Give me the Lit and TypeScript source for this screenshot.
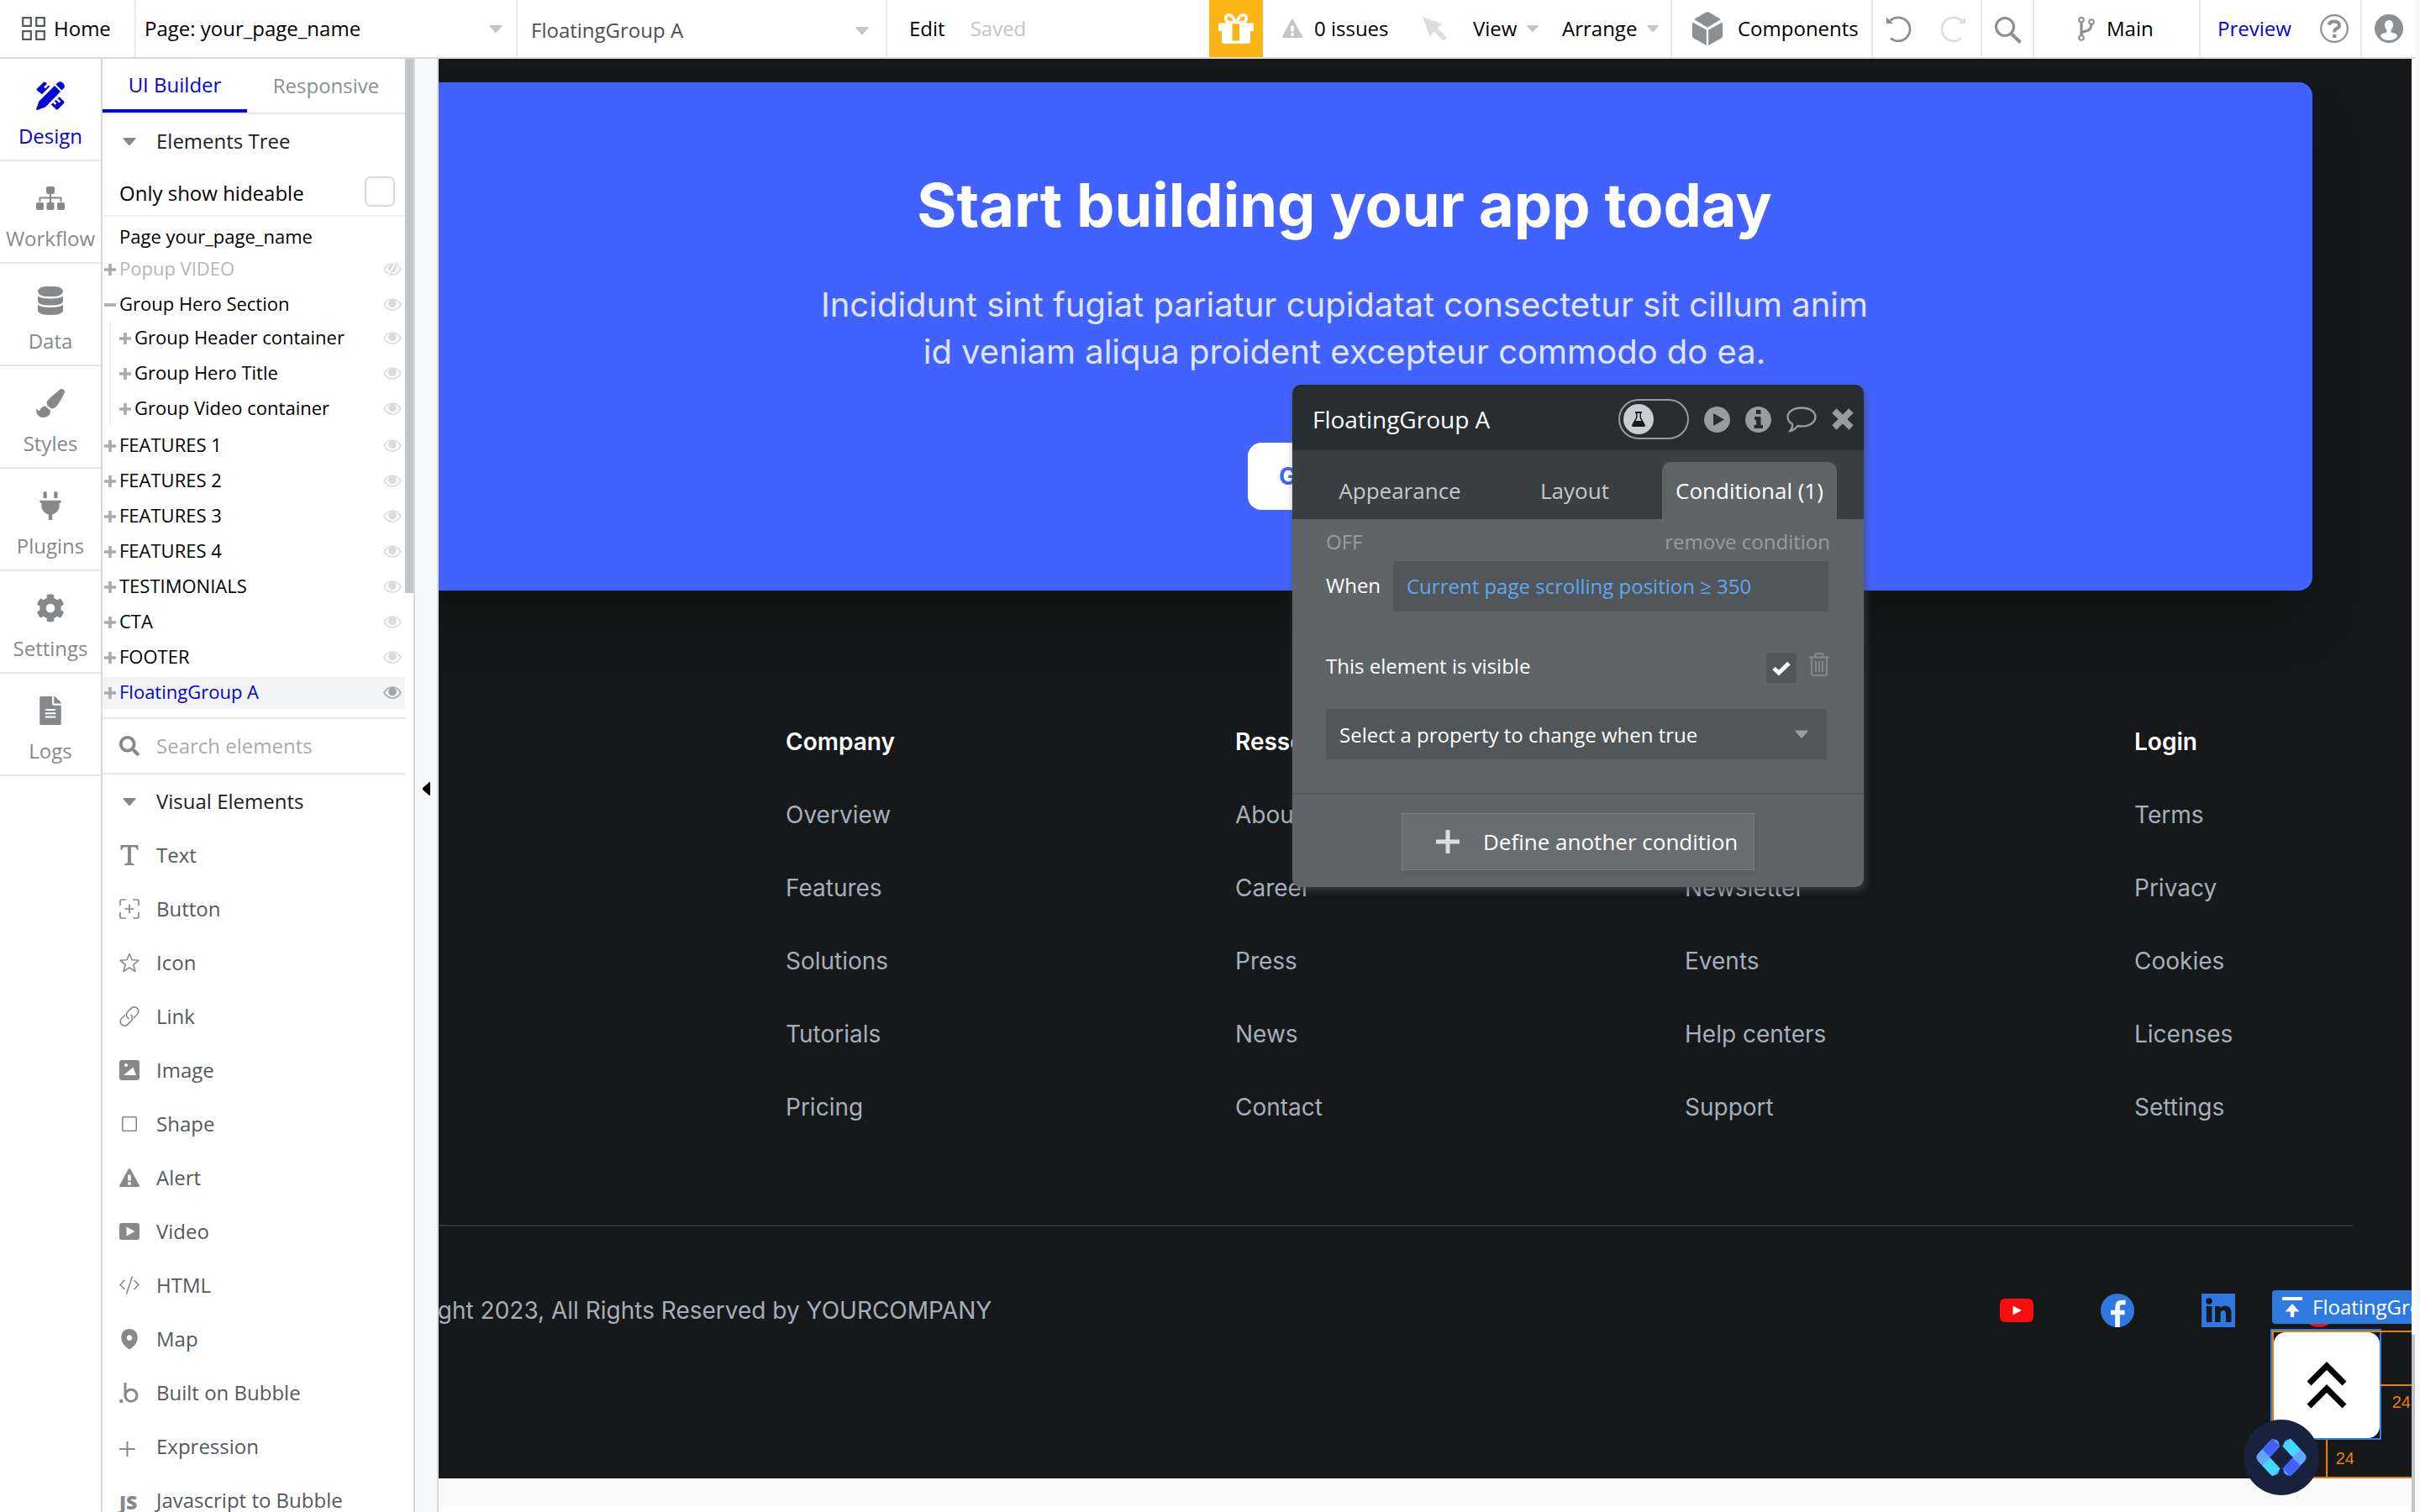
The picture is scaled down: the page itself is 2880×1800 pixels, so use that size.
import { LitElement, html, css, svg, nothing } from "lit";
import { customElement } from "lit/decorators.js";
import { classMap } from "lit/directives/class-map.js";

const base = css`
  :host {
    display: block;
    font-family: "Open Sans", "Noto Sans", sans-serif;
    font-size: 24px;
    line-height: 34px;
    color: #000;
  }
  *,
  *::before,
  *::after {
    box-sizing: border-box;
  }
  button,
  input,
  select {
    font: inherit;
    color: inherit;
    border: 0;
    margin: 0;
    padding: 0;
    background: none;
    border-radius: 0;
    outline: none;
    text-align: left;
  }
  select,
  input[type="checkbox"] {
    appearance: none;
  }
  a {
    color: inherit;
    text-decoration: none;
  }
  ul {
    list-style: none;
    margin: 0;
    padding: 0;
  }
  svg {
    display: block;
    flex: none;
    fill: currentColor;
    overflow: visible;
  }
  .line {
    fill: none;
    stroke: currentColor;
  }
`;

const icon = (w: number, h: number, box: string, body: unknown) =>
  html`<svg width=${w} height=${h} viewBox=${box} aria-hidden="true">${body}</svg>`;

const caret = (w = 16, h = 9) => icon(w, h, "0 0 16 9", svg`<path d="M1 0h14l.7 1L8.600 9H7.400L.3 1z"/>`);

const navIcons = {
  design: icon(34, 34, "0 0 34 34", svg`
    <path d="M1 8.500 8.500 1.200Q10 0 11.500 1.200L13 2.800 9.200 6.600 11 8.400 14.800 4.600 16.200 6 7 15.200 1 10.500Q.2 9.500 1 8.500z"/>
    <path d="M27.800 18.500 33 23.500Q34 24.800 33 26L26 33Q24.800 34 23.500 33L17.800 27.500 20 25.300 22.500 27.800 24.300 26 21.800 23.500 23.500 21.800 27.500 25.600 29.300 23.800 25.600 20.300z"/>
    <path d="M22 5 29 12 11 30.500 1.500 34Q0 34 .2 32.500L3.500 23.500z"/>
    <path d="M23.500 3.500 26 1.200Q28.800-.8 31.500 1.500L32.700 2.700Q35 5.500 33 8L30.500 10.500z"/>`),
  workflow: icon(34, 28, "0 0 34 28", svg`
    <rect x="12" y="0" width="10" height="9" rx="2"/><rect x="0" y="19" width="9" height="9" rx="2"/>
    <rect x="12.500" y="19" width="9" height="9" rx="2"/><rect x="25" y="19" width="9" height="9" rx="2"/>
    <path class="line" stroke-width="2" d="M17 8v11M4.500 18v-4.500h25V18"/>`),
  data: icon(30, 34, "0 0 30 34", svg`
    <rect x="0" y="0" width="30" height="12" rx="10" ry="6"/>
    <path d="M0 11.500Q4 14.500 15 14.500T30 11.500V18Q29 22.500 15 22.500T0 18z"/>
    <path d="M0 22Q4 25 15 25T30 22V29Q29 34 15 34T0 29z"/>`),
  styles: icon(34, 34, "0 0 512 512", svg`<path d="M167 309.300c-40.100 2.600-76.500 17.900-97.200 72.300-2.300 6.200-8 10-14.600 10-11.100 0-45.500-27.700-55.200-34.400C0 439.600 37.900 512 128 512c75.900 0 128-43.800 128-120.200 0-3.100-.7-6.100-1-9.100zM457.900 0c-15.200 0-29.400 6.700-40.200 16.400C213.300 199 192 203.300 192 257.100c0 13.700 3.300 26.800 8.700 38.700l63.900 53.200c7.200 1.800 14.600 3 22.300 3 62.100 0 98.100-45.500 211.200-256.500 7.400-14.300 13.900-29.800 13.900-46C512 20.600 486 0 457.900 0z"/>`),
  plugins: icon(26, 34, "0 0 384 512", svg`<path d="M256 120V32c0-17.700 14.300-32 32-32s32 14.300 32 32v88zm112 40H16c-8.800 0-16 7.200-16 16v16c0 8.800 7.200 16 16 16h16v48c0 77.400 55 142 128 156.800V512h64v-99.200C297 398 352 333.400 352 256v-48h16c8.800 0 16-7.200 16-16v-16c0-8.800-7.200-16-16-16zM128 120V32c0-17.700-14.300-32-32-32S64 14.300 64 32v88z"/>`),
  settings: icon(34, 34, "0 0 512 512", svg`<path d="M487.400 315.700l-42.600-24.600c4.300-23.200 4.300-47 0-70.200l42.600-24.600c4.900-2.800 7.100-8.600 5.500-14-11.100-35.600-30-67.800-54.700-94.600-3.800-4.100-10-5.100-14.800-2.300L380.800 110c-17.900-15.400-38.500-27.300-60.800-35.100V25.800c0-5.600-3.900-10.500-9.400-11.700-36.700-8.200-74.300-7.800-109.200 0-5.500 1.200-9.400 6.100-9.400 11.700V75c-22.200 7.900-42.800 19.800-60.800 35.100L88.700 85.500c-4.900-2.800-11-1.900-14.800 2.300-24.700 26.700-43.600 58.900-54.700 94.600-1.700 5.400.6 11.200 5.500 14L67.300 221c-4.300 23.200-4.300 47 0 70.200l-42.600 24.600c-4.900 2.800-7.100 8.600-5.500 14 11.100 35.600 30 67.800 54.700 94.600 3.800 4.100 10 5.100 14.800 2.300l42.600-24.600c17.900 15.400 38.500 27.300 60.800 35.100v49.200c0 5.600 3.900 10.500 9.400 11.700 36.700 8.200 74.300 7.800 109.200 0 5.500-1.200 9.400-6.100 9.400-11.700v-49.200c22.200-7.900 42.800-19.800 60.800-35.100l42.600 24.600c4.900 2.800 11 1.900 14.800-2.300 24.700-26.700 43.600-58.900 54.700-94.600 1.500-5.500-.7-11.300-5.600-14.100zM256 336c-44.100 0-80-35.900-80-80s35.900-80 80-80 80 35.900 80 80-35.900 80-80 80z"/>`),
  logs: icon(26, 34, "0 0 384 512", svg`<path d="M224 136V0H24C10.700 0 0 10.700 0 24v464c0 13.300 10.700 24 24 24h336c13.300 0 24-10.700 24-24V160H248c-13.200 0-24-10.800-24-24zm64 236c0 6.600-5.400 12-12 12H108c-6.600 0-12-5.400-12-12v-8c0-6.600 5.400-12 12-12h168c6.600 0 12 5.400 12 12v8zm0-64c0 6.600-5.400 12-12 12H108c-6.600 0-12-5.400-12-12v-8c0-6.600 5.400-12 12-12h168c6.600 0 12 5.400 12 12v8zm0-72v8c0 6.600-5.400 12-12 12H108c-6.600 0-12-5.400-12-12v-8c0-6.600 5.400-12 12-12h168c6.600 0 12 5.400 12 12zm96-114.100v6.100H256V0h6.100c6.400 0 12.500 2.500 17 7l97.900 98c4.500 4.500 7 10.600 7 16.900z"/>`),
};

const warning = svg`<path fill-rule="evenodd" d="M10.600 1Q12-1 13.400 1L23.700 20Q24.500 22 22.500 22H1.500Q-.5 22 .3 20zM10.200 7.500v7h3.600v-7zM10.200 16.300v3.400h3.600v-3.400z"/>`;

const elementIcons: Record<string, unknown> = {
  text: icon(24, 24, "0 0 24 24", svg`<path d="M1.500 0h21v6h-1.500q-.5-3.500-3-3.500h-4V20q0 2 3.500 2.300V24h-11v-1.700Q10 22 10 20V2.500H6Q3.500 2.500 3 6H1.500z"/>`),
  button: icon(24, 24, "0 0 24 24", svg`<path class="line" stroke-width="1.700" d="M1 8V3q0-2 2-2h5M16 1h5q2 0 2 2v5M23 16v5q0 2-2 2h-5M8 23H3q-2 0-2-2v-5M12 6.500v11M6.500 12h11"/>`),
  icon: icon(24, 24, "0 0 24 24", svg`<path class="line" stroke-width="1.500" stroke-linejoin="round" d="M12 1.500l3 7.300 8 .5-6.200 5 2.200 8.200-7-4.600-7 4.600 2.200-8.200L1 9.300l8-.5z"/>`),
  link: icon(24, 24, "0 0 24 24", svg`<path class="line" stroke-width="1.700" stroke-linecap="round" d="M6.500 10.500 2.700 14.500a5 5 0 0 0 7.200 7.200L14 17.500a5 5 0 0 0 0-7.200M17.500 13.500l3.800-4a5 5 0 0 0-7.200-7.200L10 6.500a5 5 0 0 0 0 7.200q.5.500 1.200.8"/>`),
  image: icon(24, 24, "0 0 24 24", svg`<path fill-rule="evenodd" d="M3 0h18q3 0 3 3v18q0 3-3 3H3q-3 0-3-3V3q0-3 3-3zM8 4a2 2 0 1 0 .01 0zM5 18h15L16.500 8.500z"/>`),
  shape: icon(24, 24, "0 0 24 24", svg`<rect class="line" stroke-width="1.600" x="3.800" y="3.800" width="16.400" height="16.400" rx="1"/>`),
  alert: icon(24, 22, "0 0 24 22", warning),
  video: icon(24, 20, "0 0 24 20", svg`<path fill-rule="evenodd" d="M3 0h18q3 0 3 3v14q0 3-3 3H3q-3 0-3-3V3q0-3 3-3zM8.500 4.500v11l10-5.500z"/>`),
  html: icon(24, 22, "0 0 24 22", svg`<path class="line" stroke-width="1.600" d="M6.500 5 1 10.500 6.500 16M17.500 5 23 10.500 17.500 16M15.500.5 8.500 21.500"/>`),
  map: icon(24, 24, "0 0 24 24", svg`<path fill-rule="evenodd" d="M12 0q9.500.5 9.800 10.500Q21.500 18 13.500 23.500q-1.500 1-3 0Q2.500 18 2.200 10.500 2.500.5 12 0zM12 7.300a3.300 3.300 0 1 0 .01 0z"/>`),
  bubble: icon(24, 24, "0 0 24 24", svg`<circle cx="2.200" cy="22" r="2.200"/><path class="line" stroke-width="3" d="M7 0v16"/><circle class="line" stroke-width="3" cx="14" cy="15.300" r="7"/>`),
  expression: icon(24, 24, "0 0 24 24", svg`<path class="line" stroke-width="2" d="M9.500 6v18M0 15h18.500"/>`),
  js: icon(24, 24, "0 0 24 24", svg`<text x="0" y="23" font-size="23" font-weight="800" font-family="Open Sans">JS</text>`),
};

@customElement("top-bar")
export class TopBar extends LitElement {
  static styles = [
    base,
    css`
      .bar {
        display: flex;
        height: 70px;
        border-bottom: 2px solid #d9dadb;
        background: #fff;
      }
      .cell {
        display: flex;
        align-items: center;
        flex: none;
      }
      .rule {
        border-left: 2px solid #e6eaed;
      }
      .gray {
        color: #8a9093;
      }
      .home {
        width: 160px;
        padding-left: 26px;
        gap: 10px;
      }
      .pick {
        display: grid;
        align-items: center;
        flex: none;
        color: #c4c5c7;
      }
      .pick select,
      .pick svg {
        grid-area: 1 / 1;
      }
      .pick select {
        height: 68px;
        color: #000;
      }
      .pick svg {
        justify-self: end;
        margin-right: 16px;
        pointer-events: none;
      }
      .page {
        width: 454px;
      }
      .page select {
        padding-left: 10px;
      }
      .element {
        width: 440px;
        padding-top: 4px;
      }
      .element select {
        padding-left: 16px;
        height: 62px;
        color: #4b5154;
      }
      .element svg {
        margin-right: 20px;
      }
      .edit {
        gap: 30px;
        flex: 1;
        padding-left: 26px;
      }
      .saved,
      .pale {
        color: #c4c5c7;
      }
      .gift {
        width: 64px;
        justify-content: center;
        background: #fdb515;
        color: #fff;
      }
      .issues {
        width: 190px;
        padding-left: 23px;
        gap: 14px;
      }
      .pointer {
        width: 60px;
      }
      .menu {
        gap: 12px;
      }
      .view {
        width: 106px;
      }
      .arrange {
        width: 129px;
      }
      .components {
        width: 239px;
        padding-left: 24px;
        gap: 18px;
      }
      .history {
        width: 130px;
        padding-left: 16px;
        gap: 34px;
      }
      .find {
        width: 62px;
        padding: 4px 0 0 15px;
      }
      .branch {
        width: 198px;
        padding-left: 52px;
        gap: 14px;
      }
      .preview {
        width: 192px;
        padding-left: 20px;
        gap: 34px;
        color: #0205d3;
      }
      .user {
        width: 65px;
        padding-left: 15px;
      }
    `,
  ];

  render() {
    return html`
      <header class="bar">
        <a class="cell home" href="#">
          ${icon(28, 28, "0 0 28 28", svg`<path fill="none" stroke="#555b5e" stroke-width="2.200" d="M1.200 1.200h9.600v9.600H1.200zM17.200 1.200h9.600v9.600h-9.600zM1.200 17.200h9.600v9.600H1.200zM17.200 17.200h9.600v9.600h-9.600z"/>`)}
          Home
        </a>
        <div class="pick page rule">
          <select aria-label="Page"><option>Page: your_page_name</option></select>
          ${caret()}
        </div>
        <div class="pick element rule">
          <select aria-label="Element"><option>FloatingGroup A</option></select>
          ${caret()}
        </div>
        <div class="cell edit rule"><button>Edit</button><span class="saved">Saved</span></div>
        <button class="cell gift" aria-label="Gift">
          ${icon(42, 36, "0 0 42 36", svg`<path fill-rule="evenodd" d="M1 11.500h40q1 0 1 1V20q0 1-1 1h-3v12q0 3-3 3H7q-3 0-3-3V21H1q-1 0-1-1v-7.500q0-1 1-1zM16.500 12v20.500h8.500V12z"/><path class="line" stroke-width="3.400" d="M20.500 11.500C18 4 15 1.700 12.500 1.700 8 1.700 7.500 8 11 10M21.500 11.500C24 4 27 1.700 29.500 1.700 34 1.700 34.500 8 31 10M9 10.500h24"/>`)}
        </button>
        <button class="cell issues">
          <span class="pale">${icon(24, 22, "0 0 24 22", warning)}</span>0 issues
        </button>
        <div class="cell pointer pale">
          ${icon(28, 28, "0 0 28 28", svg`<path fill="#dcddde" d="M0 0 24 8.500 17.500 13 27.500 23.500Q28.500 25 27.300 26.500L26.500 27.500Q25 28.500 23.500 27.300L13.500 17.500 8.500 24z"/>`)}
        </div>
        <button class="cell menu view">View <span class="pale">${caret(14, 8)}</span></button>
        <button class="cell menu arrange">Arrange <span class="pale">${caret(14, 8)}</span></button>
        <button class="cell components rule">
          <span class="gray">${icon(36, 40, "0 0 36 40", svg`<path d="M16 .8Q18-.4 20 .8L34 9 18 18.700 2 9zM0 12.500 16.800 21.500V40L2 31.800Q0 30.500 0 29zM36 12.500 19.200 21.500V40L34 31.800Q36 30.500 36 29z"/>`)}</span>
          Components
        </button>
        <div class="cell history rule">
          <button class="gray" aria-label="Undo">
            ${icon(30, 31, "0 0 30 31", svg`<path class="line" stroke-width="2.800" d="M5 26.500A14 14 0 1 0 4.500 5.500"/><path d="M0 1.500v7.500h8z"/>`)}
          </button>
          <button class="pale" aria-label="Redo">
            ${icon(30, 31, "0 0 30 31", svg`<path fill="none" stroke="#dcddde" stroke-width="2.800" d="M25 26.500A14 14 0 1 1 25.500 5.500"/><path fill="#dcddde" d="M30 1.500v7.500h-8z"/>`)}
          </button>
        </div>
        <button class="cell find rule gray" aria-label="Search">
          ${icon(32, 32, "0 0 32 32", svg`<circle class="line" cx="12" cy="12" r="10.500" stroke-width="3.200"/><path class="line" stroke-width="4" d="M20 20.500 30.500 30.500"/>`)}
        </button>
        <button class="cell branch rule">
          <span class="gray">${icon(20, 29, "0 0 20 29", svg`<g class="line" stroke-width="2"><circle cx="4" cy="3.800" r="2.800"/><circle cx="16" cy="6" r="2.800"/><circle cx="4" cy="25" r="2.800"/><path stroke-width="3.200" d="M4 6.500V22M4 21Q4 18 9 17.200 15.500 16 16 9"/></g>`)}</span>
          Main
        </button>
        <div class="cell preview rule">
          <a href="#">Preview</a>
          <button class="gray" aria-label="Help">
            ${icon(34, 34, "0 0 34 34", svg`<circle class="line" cx="17" cy="17" r="15.800" stroke-width="2.200"/><path class="line" stroke-width="4" d="M10.500 12.500Q12 8.500 17 8.500 23 8.500 23 13 23 16 19.500 17.200 17.200 18.200 17.200 21.500"/><path d="M15 24h4.400v4H15z"/>`)}
          </button>
        </div>
        <button class="cell user rule gray" aria-label="Account">
          ${icon(34, 34, "0 0 34 34", svg`<circle cx="17" cy="17" r="17"/><path fill="#fff" d="M17 7Q22 7.200 22 13 22 16.500 19.600 18.800V21Q20 22 23 22.600 27 23.600 27 26.500 23 31 17 31T7 26.500Q7 23.600 11 22.600 14 22 14.400 21V18.800Q12 16.500 12 13 12 7.200 17 7z"/>`)}
        </button>
      </header>
    `;
  }
}

@customElement("side-nav")
export class SideNav extends LitElement {
  static styles = [
    base,
    css`
      :host {
        width: 122px;
        flex: none;
        border-right: 2px solid #d9dadb;
      }
      .item {
        display: grid;
        grid-template-rows: 34px 34px;
        gap: 14px;
        height: 122px;
        padding-top: 27px;
        place-items: center;
        border-bottom: 2px solid #e3e8ec;
        color: #85898c;
        line-height: 34px;
      }
      .active {
        color: #0205d3;
      }
    `,
  ];

  render() {
    const items: [string, keyof typeof navIcons][] = [
      ["Design", "design"],
      ["Workflow", "workflow"],
      ["Data", "data"],
      ["Styles", "styles"],
      ["Plugins", "plugins"],
      ["Settings", "settings"],
      ["Logs", "logs"],
    ];
    return html`<nav>
      ${items.map(
        ([label, key], i) => html`<a href="#" class=${classMap({ item: true, active: i === 0 })}>${navIcons[key]}<span>${label}</span></a>`
      )}
    </nav>`;
  }
}

type Row = { name: string; sign?: "plus" | "minus"; kind?: "page" | "hidden" | "selected" };

@customElement("element-panel")
export class ElementPanel extends LitElement {
  static styles = [
    base,
    css`
      :host {
        display: flex;
        flex: none;
        width: 372px;
        border-right: 2px solid #d9dadb;
      }
      .content {
        flex: 1;
        min-width: 0;
      }
      .track {
        width: 10px;
        flex: none;
      }
      .thumb {
        height: 34vh;
        min-height: 636px;
        background: #c4c5c8;
      }
      .tabs {
        display: flex;
        height: 66px;
        border-bottom: 2px solid #e3e8ec;
      }
      .tabs button {
        flex: 1;
        text-align: center;
        color: #8b8f92;
      }
      .tabs .on {
        flex: none;
        width: 172px;
        padding-top: 2px;
        color: #0205d3;
        border-bottom: 4px solid #0205d3;
      }
      .head,
      .entry {
        display: grid;
        grid-template-columns: 24px 1fr;
        gap: 20px;
        align-items: center;
        width: 100%;
        height: 64px;
        padding-left: 20px;
        color: #1c2022;
      }
      .head svg {
        justify-self: center;
        color: #85898c;
      }
      .entry {
        color: #54595c;
      }
      .entry svg {
        color: #85898c;
      }
      .hideable {
        display: flex;
        align-items: center;
        justify-content: space-between;
        height: 58px;
        padding: 0 12px 0 20px;
        border-bottom: 2px solid #f1f2f4;
      }
      .hideable label {
        padding-top: 4px;
      }
      .box {
        width: 36px;
        height: 36px;
        border: 2px solid #d9dadb;
        border-radius: 7px;
        background: #fff;
      }
      .tree {
        display: grid;
        gap: 4px;
        padding: 6px 0 10px;
        font-size: 22px;
        border-bottom: 2px solid #e3e8ec;
      }
      .row {
        display: flex;
        align-items: center;
        width: 100%;
        height: 38px;
        padding: 0 4px 4px 2px;
        color: #000;
      }
      .row span {
        flex: 1;
      }
      .sign {
        color: #a9abad;
        margin: 3px 4px 0 0;
      }
      .gap {
        width: 18px;
        flex: none;
      }
      .eye {
        color: #dadbdc;
        margin-top: 3px;
      }
      .page {
        margin-bottom: -4px;
      }
      .hidden {
        color: #b4b6b8;
      }
      .selected {
        background: #f3f4f6;
        color: #0205d3;
      }
      .selected .eye {
        color: #a4a6a8;
      }
      .children {
        display: grid;
        gap: 4px;
        margin: -2px 0 2px 8px;
        border-left: 2px solid #eeeff0;
      }
      .children .row {
        padding-left: 10px;
      }
      .search {
        display: grid;
        grid-template-columns: 24px 1fr;
        gap: 20px;
        align-items: center;
        height: 66px;
        padding-left: 20px;
        color: #85898c;
        border-bottom: 2px solid #e3e8ec;
      }
      .search input {
        width: 100%;
      }
      .search input::placeholder {
        color: #a9abad;
        opacity: 1;
      }
    `,
  ];

  private row({ name, sign = "plus", kind }: Row) {
    const hidden = kind === "hidden";
    return html`<button class=${classMap({ row: true, page: kind === "page", hidden, selected: kind === "selected" })}>
      ${kind === "page"
        ? html`<i class="gap"></i>`
        : html`<i class="sign">${icon(14, 14, "0 0 14 14", sign === "plus" ? svg`<path d="M5.200 0h3.600v5.200H14v3.600H8.800V14H5.200V8.800H0V5.200h5.200z"/>` : svg`<path d="M0 5.200h14v3.600H0z"/>`)}</i>`}
      <span>${name}</span>
      ${kind === "page"
        ? nothing
        : html`<i class="eye">${icon(22, 15, "0 0 22 15", svg`<path class="line" stroke-width="1.600" d="M1 7.500Q5 1 11 1t10 6.500Q17 14 11 14T1 7.500z"/><circle cx="11" cy="6.500" r="4.800"/>${hidden ? svg`<path stroke="#fff" stroke-width="2" d="M6 16 15-1"/><path class="line" stroke-width="1.500" d="M7.500 16 16.500-1"/>` : nothing}`)}</i>`}
    </button>`;
  }

  render() {
    const children: Row[] = ["Group Header container", "Group Hero Title", "Group Video container"].map((name) => ({ name }));
    const sections: Row[] = ["FEATURES 1", "FEATURES 2", "FEATURES 3", "FEATURES 4", "TESTIMONIALS", "CTA", "FOOTER"].map((name) => ({ name }));
    const elements: [string, string][] = [
      ["text", "Text"],
      ["button", "Button"],
      ["icon", "Icon"],
      ["link", "Link"],
      ["image", "Image"],
      ["shape", "Shape"],
      ["alert", "Alert"],
      ["video", "Video"],
      ["html", "HTML"],
      ["map", "Map"],
      ["bubble", "Built on Bubble"],
      ["expression", "Expression"],
      ["js", "Javascript to Bubble"],
    ];
    return html`
      <div class="content">
        <div class="tabs"><button class="on">UI Builder</button><button>Responsive</button></div>
        <button class="head">${caret()}Elements Tree</button>
        <div class="hideable">
          <label for="hideable">Only show hideable</label>
          <input class="box" id="hideable" type="checkbox" />
        </div>
        <div class="tree">
          ${this.row({ name: "Page your_page_name", kind: "page" })}
          ${this.row({ name: "Popup VIDEO", kind: "hidden" })}
          ${this.row({ name: "Group Hero Section", sign: "minus" })}
          <div class="children">${children.map((r) => this.row(r))}</div>
          ${sections.map((r) => this.row(r))}
          ${this.row({ name: "FloatingGroup A", kind: "selected" })}
        </div>
        <label class="search">
          ${icon(24, 24, "0 0 512 512", svg`<path d="M505 442.700L405.300 343c-4.500-4.500-10.600-7-17-7H372c27.600-35.300 44-79.700 44-128C416 93.100 322.900 0 208 0S0 93.100 0 208s93.100 208 208 208c48.300 0 92.700-16.400 128-44v16.300c0 6.400 2.500 12.500 7 17l99.700 99.700c9.400 9.400 24.600 9.400 33.900 0l28.300-28.300c9.400-9.400 9.400-24.600.1-34zM208 336c-70.700 0-128-57.200-128-128 0-70.700 57.200-128 128-128 70.700 0 128 57.200 128 128 0 70.700-57.200 128-128 128z"/>`)}
          <input type="text" placeholder="Search elements" aria-label="Search elements" />
        </label>
        <button class="head">${caret()}Visual Elements</button>
        ${elements.map(([key, label]) => html`<button class="entry">${elementIcons[key]}<span>${label}</span></button>`)}
      </div>
      <div class="track"><div class="thumb"></div></div>
    `;
  }
}

@customElement("property-editor")
export class PropertyEditor extends LitElement {
  static styles = [
    base,
    css`
      :host {
        width: 680px;
        border-radius: 10px;
        overflow: hidden;
        background: #5f6467;
        color: #fff;
        box-shadow: 2px 4px 8px rgba(70, 76, 78, 0.7);
      }
      .title {
        display: flex;
        align-items: center;
        height: 78px;
        padding: 4px 12px 0 24px;
        background: #272e30;
        color: #989c9e;
      }
      .title h2 {
        flex: 1;
        margin: 0;
        font-size: 28px;
        font-weight: 400;
        color: #fff;
        line-height: 38px;
      }
      .tools {
        display: flex;
        align-items: center;
        gap: 18px;
      }
      .toggle {
        display: flex;
        align-items: center;
        width: 84px;
        height: 48px;
        padding-left: 4px;
        border: 2px solid #989c9e;
        border-radius: 24px;
      }
      .knob {
        display: grid;
        place-items: center;
        width: 36px;
        height: 36px;
        border-radius: 50%;
        background: #cbccd2;
        color: #17191a;
      }
      .tabs {
        display: flex;
        align-items: flex-end;
        height: 82px;
        background: #3a3f42;
        padding-right: 32px;
        font-size: 26px;
      }
      .tabs button {
        flex: 1;
        height: 68px;
        padding-right: 24px;
        text-align: center;
        color: #c6c8c9;
      }
      .tabs .first {
        flex: none;
        width: 256px;
        padding: 0;
      }
      .tabs .on {
        flex: none;
        width: 208px;
        padding: 0;
        color: #fff;
        background: #5f6467;
        border-radius: 10px 10px 0 0;
      }
      .body {
        display: grid;
        padding: 8px 42px 40px 40px;
        border-bottom: 2px solid #545a5c;
      }
      .state {
        display: flex;
        align-items: center;
        justify-content: space-between;
        height: 42px;
        padding-bottom: 4px;
        margin-right: -2px;
        color: #989c9e;
      }
      .when {
        display: grid;
        grid-template-columns: 64px 1fr;
        gap: 16px;
        align-items: center;
      }
      .field {
        width: 100%;
        height: 60px;
        padding: 0 16px;
        border-radius: 3px;
        background: #515658;
      }
      .when .field {
        color: #60a6f2;
        padding-bottom: 2px;
      }
      .when label {
        padding-bottom: 2px;
      }
      .visible {
        display: flex;
        align-items: center;
        gap: 15px;
        margin: 48px 0 30px;
      }
      .visible label {
        flex: 1;
        padding-bottom: 4px;
      }
      .tick {
        display: grid;
        place-items: center;
      }
      .tick input,
      .tick svg,
      .choose select,
      .choose svg {
        grid-area: 1 / 1;
      }
      .tick input {
        width: 36px;
        height: 36px;
        border-radius: 3px;
        background: #515658;
      }
      .tick svg,
      .choose svg {
        pointer-events: none;
      }
      .trash {
        color: #85898c;
        padding-bottom: 8px;
        margin-right: -1px;
      }
      .choose {
        display: grid;
        align-items: center;
        margin-right: 2px;
        color: #989c9e;
      }
      .choose select {
        color: #fff;
        padding-top: 2px;
      }
      .choose svg {
        justify-self: end;
        margin-right: 22px;
      }
      .more {
        display: grid;
        justify-items: center;
        padding: 22px 0 20px;
      }
      .more button {
        display: flex;
        align-items: center;
        gap: 28px;
        height: 68px;
        width: 420px;
        padding-left: 40px;
        font-size: 26px;
        border: 1px solid #787e80;
        background: #686d70;
        box-shadow: 2px 3px 4px rgba(80, 86, 88, 0.5);
      }
      .more svg {
        color: #dcddde;
      }
    `,
  ];

  render() {
    return html`
      <div class="title">
        <h2>FloatingGroup A</h2>
        <div class="tools">
          <button class="toggle" aria-label="Experimental mode">
            <span class="knob">${icon(16, 18, "0 0 16 18", svg`<path fill-rule="evenodd" d="M4 0h8v2h-1v5l5 9q.3 2-1.500 2h-13Q-.3 18 0 16l5-9V2H4zM6.500 2v5.500L4.500 11h7l-2-3.500V2z"/>`)}</span>
          </button>
          <button aria-label="Run">${icon(31, 31, "0 0 31 31", svg`<path fill-rule="evenodd" d="M15.500 0a15.500 15.500 0 1 0 .01 0zM11 8v15l13-7.500z"/>`)}</button>
          <button aria-label="Info">${icon(31, 31, "0 0 31 31", svg`<path fill-rule="evenodd" d="M15.500 0a15.500 15.500 0 1 0 .01 0zM13 4h5.500v5H13zM11 12h7.500v10H21v4H10.500v-4H13v-6h-2z"/>`)}</button>
          <button aria-label="Comments">${icon(36, 32, "0 0 36 32", svg`<path class="line" stroke-width="2.400" d="M18 2.500C27 2.500 34.500 7 34.500 13.500S27 24.500 18 24.500Q15.500 24.500 13.500 24 9.500 29 4.500 30 7.500 26.500 7 21.800 1.500 18.500 1.500 13.500C1.500 7 9 2.500 18 2.500z"/>`)}</button>
          <button aria-label="Close">${icon(26, 26, "0 0 26 26", svg`<path class="line" stroke-width="7.500" d="M3 3l20 20M23 3 3 23"/>`)}</button>
        </div>
      </div>
      <div class="tabs">
        <button class="first">Appearance</button><button>Layout</button><button class="on">Conditional (1)</button>
      </div>
      <div class="body">
        <div class="state"><button>OFF</button><button>remove condition</button></div>
        <div class="when">
          <label for="when">When</label>
          <input class="field" id="when" type="text" readonly value="Current page scrolling position ≥ 350" />
        </div>
        <div class="visible">
          <label for="visible">This element is visible</label>
          <span class="tick">
            <input id="visible" type="checkbox" checked />
            ${icon(22, 17, "0 0 22 17", svg`<path fill="none" stroke="#fff" stroke-width="5" d="M2 8.500 8 14 20 2.500"/>`)}
          </span>
          <button class="trash" aria-label="Delete">
            ${icon(24, 28, "0 0 24 28", svg`<path class="line" stroke-width="2" d="M0 5.500h24M7.500 5V2.500Q7.500 1 9 1h6q1.500 0 1.500 1.500V5M3 6v18.500Q3 27 5 27h14q2 0 2-2.500V6M8 10v13M12 10v13M16 10v13"/>`)}
          </button>
        </div>
        <div class="choose">
          <select class="field" aria-label="Property to change"><option>Select a property to change when true</option></select>
          ${caret(16, 10)}
        </div>
      </div>
      <div class="more">
        <button>${icon(28, 28, "0 0 28 28", svg`<path class="line" stroke-width="5" d="M14 0v28M0 14h28"/>`)}Define another condition</button>
      </div>
    `;
  }
}

@customElement("page-canvas")
export class PageCanvas extends LitElement {
  static styles = [
    base,
    css`
      :host {
        position: relative;
        flex: 1;
        min-width: 0;
        overflow: hidden;
        background: #fff;
        font-family: Inter, sans-serif;
      }
      .site {
        padding: 28px 70px 180px 0;
        background: #161819;
      }
      /* The artboard is wider than the viewport and starts under the left gutter. */
      .sheet {
        margin-left: -122px;
      }
      .hero {
        display: grid;
        justify-items: center;
        margin: 0 48px;
        padding: 102px 0 96px;
        border-radius: 16px;
        background: #4262ff;
        color: #fff;
        text-align: center;
        box-shadow: 0 40px 60px rgba(0, 0, 0, 0.2);
      }
      .hero h1 {
        margin: 0;
        font-size: 72px;
        line-height: 88px;
        font-weight: 700;
      }
      .hero p {
        max-width: 1280px;
        margin: 47px 0 80px;
        font-size: 40px;
        line-height: 56px;
        color: #dfe4ff;
      }
      .hero button {
        width: 230px;
        height: 80px;
        border-radius: 16px;
        background: #fff;
        color: #4262ff;
        font-size: 28px;
        font-weight: 700;
        text-align: center;
      }
      .columns {
        display: grid;
        grid-template-columns: repeat(4, 1fr) 260px;
        margin-top: 160px;
        padding-bottom: 120px;
        border-bottom: 2px solid #2e3536;
        font-size: 28px;
        line-height: 40px;
        color: #a5afb9;
      }
      .columns ul {
        display: grid;
        gap: 47px;
      }
      .columns li {
        height: 40px;
      }
      .columns h3 {
        margin: 0;
        font-size: 28px;
        font-weight: 600;
        color: #fff;
      }
      .legal {
        display: flex;
        align-items: center;
        justify-content: space-between;
        padding: 80px 20px 0 0;
        font-size: 28px;
        line-height: 40px;
        color: #a5afb9;
      }
      .social {
        display: flex;
        gap: 80px;
      }
      .strip {
        height: 32px;
        background: #fafafa;
      }
      property-editor {
        position: absolute;
        left: 1016px;
        top: 388px;
      }
      /* Selection frame, its distance guides and the badge. */
      .guide {
        position: absolute;
        background: #e8800a;
      }
      .top {
        right: 0;
        top: 1514px;
        width: 166px;
        height: 2px;
      }
      .side {
        right: 164px;
        top: 1514px;
        width: 2px;
        height: 130px;
      }
      .middle {
        right: 0;
        top: 1578px;
        width: 38px;
        height: 2px;
      }
      .down {
        right: 100px;
        top: 1644px;
        width: 2px;
        height: 46px;
      }
      .bottom {
        right: 0;
        top: 1688px;
        width: 166px;
        height: 2px;
      }
      .measure {
        position: absolute;
        font: 20px/22px "Liberation Sans", Arial, sans-serif;
        color: #e8800a;
      }
      .m1 {
        right: 1px;
        top: 1588px;
      }
      .m2 {
        right: 68px;
        top: 1655px;
      }
      .frame {
        position: absolute;
        right: 36px;
        top: 1512px;
        width: 132px;
        height: 132px;
        padding: 2px 0 0 2px;
        border: 2px solid #2f7de1;
      }
      .frame button {
        display: grid;
        place-items: center;
        width: 126px;
        height: 126px;
        border-radius: 14px;
        background: #fff;
      }
      .tag {
        position: absolute;
        left: calc(100% - 166px);
        top: 1466px;
        display: flex;
        align-items: center;
        gap: 12px;
        height: 40px;
        width: 230px;
        padding-left: 12px;
        border-radius: 4px 0 0 4px;
        background: #2f7adf;
        color: #fff;
        font-family: "Open Sans", sans-serif;
        white-space: nowrap;
      }
      .badge {
        position: absolute;
        right: 110px;
        top: 1620px;
        width: 90px;
        height: 90px;
        border-radius: 50%;
        background: #18223c;
      }
    `,
  ];

  render() {
    const columns: { title: string; links: string[] }[] = [
      { title: "", links: [] },
      { title: "Company", links: ["Overview", "Features", "Solutions", "Tutorials", "Pricing"] },
      { title: "Ressources", links: ["About", "Career", "Press", "News", "Contact"] },
      { title: "", links: ["", "Newsletter", "Events", "Help centers", "Support"] },
      { title: "Login", links: ["Terms", "Privacy", "Cookies", "Licenses", "Settings"] },
    ];
    return html`
      <main class="site">
        <div class="sheet">
          <section class="hero">
            <h1>Start building your app today</h1>
            <p>Incididunt sint fugiat pariatur cupidatat consectetur sit cillum anim id veniam aliqua proident excepteur commodo do ea.</p>
            <button>Get Started</button>
          </section>
          <div class="columns">
            ${columns.map(
              ({ title, links }) => html`<ul>
                ${links.length ? html`<li>${title ? html`<h3>${title}</h3>` : nothing}</li>` : nothing}
                ${links.map((l) => html`<li>${l ? html`<a href="#">${l}</a>` : nothing}</li>`)}
              </ul>`
            )}
          </div>
          <div class="legal">
            <span>© Copyright 2023, All Rights Reserved by YOURCOMPANY</span>
            <div class="social">
              <a href="#" aria-label="YouTube">${icon(40, 40, "0 0 40 40", svg`<rect y="6" width="40" height="28" rx="6" fill="#f80d10"/><path fill="#fff" d="M15.500 14.500v11l10.500-5.500z"/>`)}</a>
              <a href="#" aria-label="Facebook">${icon(40, 40, "0 0 40 40", svg`<circle cx="20" cy="20" r="20" fill="#2f78e0"/><path fill="none" stroke="#fff" stroke-width="5.500" d="M20 40V16Q20 10.500 25 10.500h4.500M12 22.500h16.500"/>`)}</a>
              <a href="#" aria-label="LinkedIn">${icon(40, 40, "0 0 40 40", svg`<rect width="40" height="40" rx="1" fill="#2f78e0"/><g fill="#161819"><circle cx="9" cy="9" r="3.800"/><path d="M5.800 15h6.600v19H5.800zM16 15h6.200v2.600q2-3 6-3 7.300 0 7.300 9V34H29V24.500q0-4.500-3-4.500-3.500 0-3.500 4.500V34H16z"/></g>`)}</a>
              <a href="#" aria-label="Pinterest">${icon(40, 40, "0 0 40 40", svg`<circle cx="20" cy="20" r="20" fill="#e0191e"/>`)}</a>
            </div>
          </div>
        </div>
      </main>
      <div class="strip"></div>

      <div class="frame">
        <button aria-label="Back to top">${icon(48, 56, "0 0 48 56", svg`<path fill="none" stroke="#000" stroke-width="7" d="M3 26 24 5 45 26M3 53 24 32 45 53"/>`)}</button>
      </div>
      <i class="guide top"></i><i class="guide side"></i><i class="guide middle"></i><i class="guide down"></i><i class="guide bottom"></i>
      <span class="measure m1">24</span><span class="measure m2">24</span>
      <div class="tag">
        ${icon(24, 24, "0 0 24 24", svg`<path d="M0 0h24v4H0zM12 8l8.500 9.500H14.200V24H9.800V17.500H3.500z"/>`)}
        FloatingGroup A
      </div>
      <button class="badge" aria-label="Assistant">
        ${icon(90, 90, "0 0 90 90", svg`<g fill="none" stroke-width="13" stroke-linejoin="round" stroke-linecap="round">
          <path stroke="#62a5f5" d="M36 30 22 45 36 60M54 30 68 45 54 60"/>
          <g stroke-linecap="butt"><path stroke="#4262ff" d="M39 27 27 40M51 63 63 50"/><path stroke="#44d7ff" d="M39 63 27 50M51 27 63 40"/></g></g>`)}
      </button>
      <property-editor></property-editor>
    `;
  }
}

@customElement("app-root")
export class AppRoot extends LitElement {
  static styles = [
    base,
    css`
      .app {
        display: grid;
        grid-template-columns: minmax(0, 1fr) 6px;
        grid-template-rows: 70px minmax(0, 1fr);
        height: 100vh;
        overflow: hidden;
        background: #fff;
      }
      .edge {
        grid-area: 1 / 2 / 3 / 3;
        background: #f9f9fa;
      }
      .work {
        grid-area: 2 / 1;
        display: flex;
        min-height: 0;
      }
      .gutter {
        display: grid;
        place-items: center;
        flex: none;
        width: 28px;
        padding-top: 8px;
        background: #f7f8fa;
        border-right: 2px solid #d9dadb;
      }
      .scroll {
        display: flex;
        flex: none;
        align-items: flex-end;
        width: 4px;
      }
      .thumb {
        width: 4px;
        height: 211px;
        background: #c4c5c8;
      }
    `,
  ];

  render() {
    return html`
      <div class="app">
        <top-bar></top-bar>
        <div class="edge"></div>
        <div class="work">
          <side-nav></side-nav>
          <element-panel></element-panel>
          <button class="gutter" aria-label="Collapse panel">${icon(9, 16, "0 0 9 16", svg`<path d="M9 0v16H8L0 9V7L8 0z"/>`)}</button>
          <page-canvas></page-canvas>
          <div class="scroll"><div class="thumb"></div></div>
        </div>
      </div>
    `;
  }
}
